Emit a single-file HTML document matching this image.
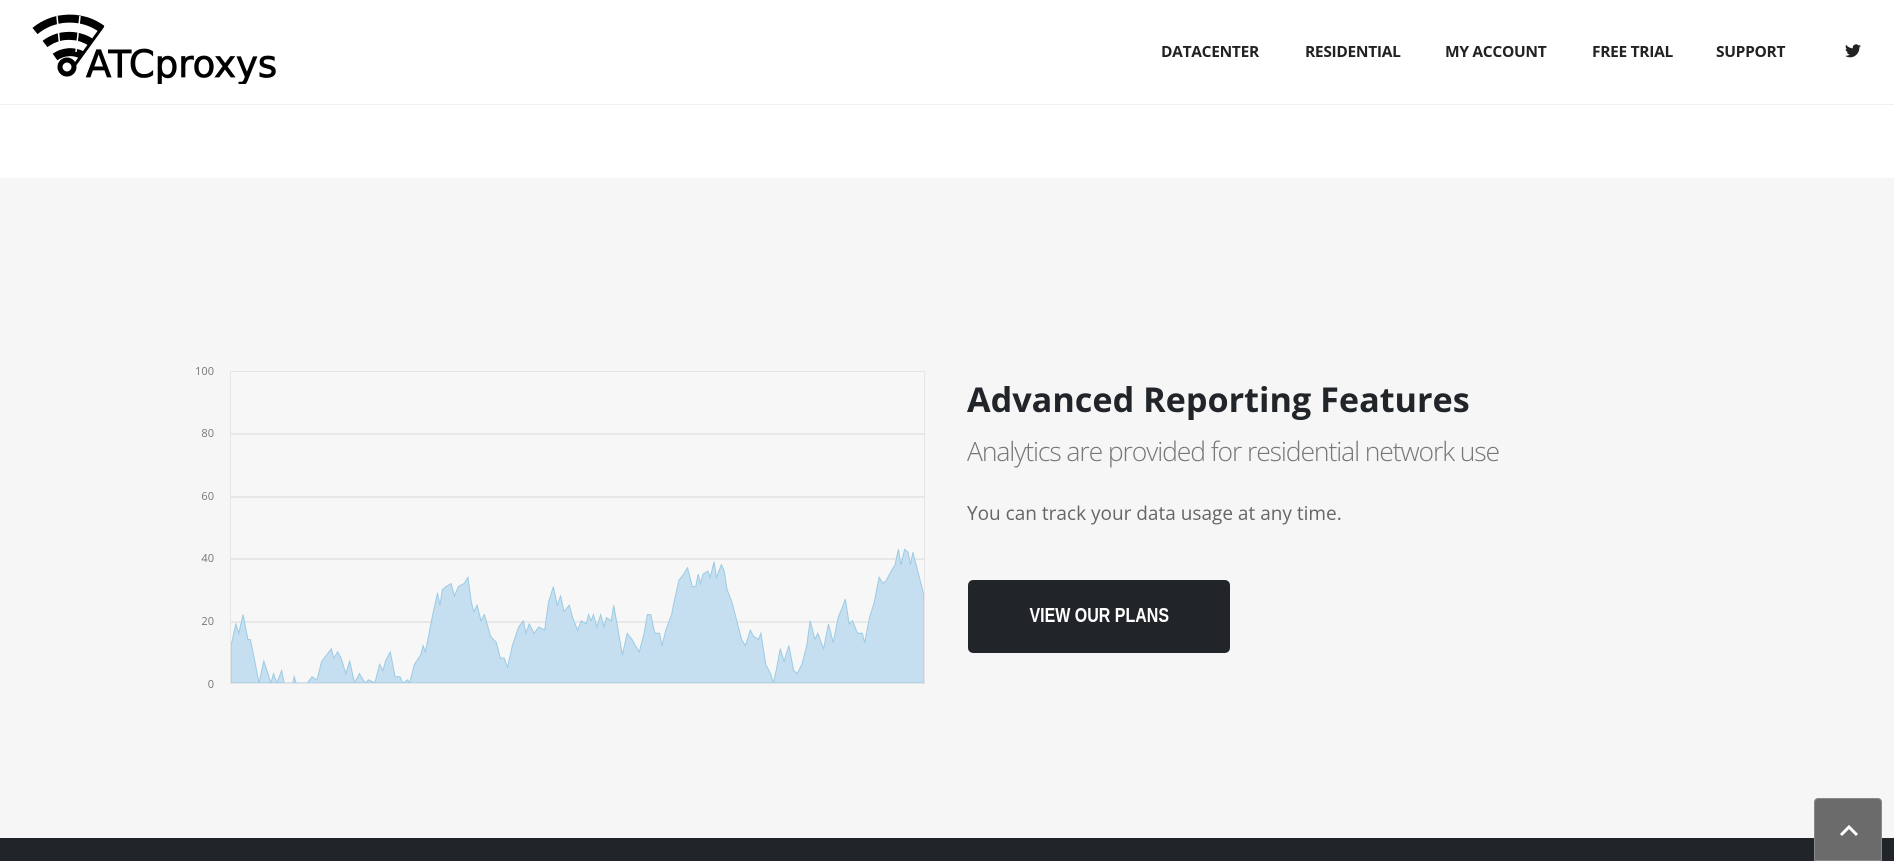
<!DOCTYPE html>
<html><head><meta charset="utf-8"><style>
*{margin:0;padding:0;box-sizing:border-box}
body{width:1894px;height:861px;overflow:hidden;background:#f6f6f6;font-family:"Open Sans","Liberation Sans",sans-serif;position:relative}
.hdr{position:absolute;left:0;top:0;width:1894px;height:105px;background:#fff;border-bottom:1px solid #f0f0f0}
.band{position:absolute;left:0;top:105px;width:1894px;height:73px;background:#fff}
.nav a{position:absolute;top:40px;font-size:15.5px;font-weight:bold;color:#222;text-decoration:none;letter-spacing:-0.3px}
.chart{position:absolute;left:230px;top:371px;width:695px;height:313px;border:1px solid #e6e6e6;background:#f7f7f7}
.gl{position:absolute;left:0;width:100%;height:2px;background:#e8e8e8}
.lbl{position:absolute;width:30px;left:184px;text-align:right;font-size:11px;color:#777}
h2{position:absolute;left:967px;top:376px;font-size:34.2px;font-weight:bold;color:#212529;white-space:nowrap}
.sub{position:absolute;left:967px;top:433px;font-size:26.5px;font-weight:300;color:#777;letter-spacing:-1.1px;white-space:nowrap}
.p{position:absolute;left:967px;top:500px;font-size:19px;color:#666;white-space:nowrap}
.btn{position:absolute;left:968px;top:580px;width:262px;height:73px;background:#212529;border-radius:5px;color:#fff;font-weight:bold;font-size:20px;text-align:center;line-height:73px;font-family:"Liberation Sans Narrow","Liberation Sans",sans-serif}
.foot{position:absolute;left:0;top:838px;width:1894px;height:23px;background:#212529}
.top{position:absolute;left:1814px;top:798px;width:68px;height:63px;background:#6b6b6b;border-radius:4px 4px 0 0;border:1px solid #888}
</style></head><body>
<div class="hdr">
<svg style="position:absolute;left:30px;top:14px" width="260" height="70" viewBox="0 0 260 70">
 <g fill="none" stroke="#000" stroke-linecap="butt">
  <path d="M5 17 A55 55 0 0 1 72 15" stroke-width="8"/>
  <path d="M15 30 A40 40 0 0 1 62 29" stroke-width="8"/>
  <path d="M25 43 A26 26 0 0 1 52 41" stroke-width="8"/>
  <path d="M44 52 L73 12" stroke-width="3"/>
 </g>
 <g stroke="#fff" stroke-width="1.5"><path d="M27 2 L30 35"/><path d="M50 2 L46 38"/></g>
 <circle cx="37" cy="53" r="7" fill="none" stroke="#000" stroke-width="5"/>
 <text x="56" y="63" font-family="DejaVu Sans,Liberation Sans,sans-serif" font-size="37" fill="#000" stroke="#000" stroke-width="0.8" letter-spacing="0">ATCproxys</text>
</svg>
<div class="nav">
<a style="left:1161px">DATACENTER</a><a style="left:1305px">RESIDENTIAL</a><a style="left:1445px">MY ACCOUNT</a><a style="left:1592px">FREE TRIAL</a><a style="left:1716px">SUPPORT</a>
<svg style="position:absolute;left:1845px;top:44px" width="16" height="14" viewBox="0 0 24 20"><path fill="#222" d="M24 2.4a10 10 0 0 1-2.8.8A5 5 0 0 0 23.3.4a10 10 0 0 1-3.1 1.2A4.9 4.9 0 0 0 11.8 6 14 14 0 0 1 1.7.9a4.9 4.9 0 0 0 1.5 6.6A4.9 4.9 0 0 1 1 6.9 4.9 4.9 0 0 0 4.9 11.8a5 5 0 0 1-2.2.1 4.9 4.9 0 0 0 4.6 3.4A9.9 9.9 0 0 1 0 17.3 14 14 0 0 0 7.5 19.5c9 0 14-7.5 14-14v-.6A10 10 0 0 0 24 2.4z"/></svg>
</div>
</div>
<div class="band"></div>
<div class="lbl" style="top:364px">100</div>
<div class="lbl" style="top:426px">80</div>
<div class="lbl" style="top:489px">60</div>
<div class="lbl" style="top:551px">40</div>
<div class="lbl" style="top:614px">20</div>
<div class="lbl" style="top:677px">0</div>
<div class="chart">
<div class="gl" style="top:61px"></div><div class="gl" style="top:124px"></div><div class="gl" style="top:186px"></div><div class="gl" style="top:249px"></div>
<svg style="position:absolute;left:0;top:0" width="693" height="311" viewBox="102 0 1436 100" preserveAspectRatio="none">
<path fill="#c5dff0" stroke="#9ccbe3" stroke-width="1" vector-effect="non-scaling-stroke" d="M102 100 L102 88 L112 81 L118 84 L127 78 L137 86 L142 86 L150 92 L160 100 L170 93 L185 100 L190 97 L197 100 L207 96 L212 100 L230 100 L233 98 L237 100 L260 100 L270 98 L280 99 L290 93 L300 91 L310 89 L315 92 L323 90 L330 92 L340 97 L348 93 L358 100 L368 97 L380 100 L387 99 L400 100 L410 94 L417 96 L422 93 L432 90 L442 98 L452 98 L458 100 L468 99 L472 100 L482 94 L495 91 L500 88 L505 90 L520 78 L530 71 L535 75 L540 70 L548 69 L558 68 L565 72 L573 69 L585 68 L593 66 L600 74 L605 77 L612 75 L620 80 L627 78 L640 85 L652 87 L660 92 L668 92 L675 95 L685 88 L698 82 L708 80 L713 84 L720 81 L730 84 L740 82 L752 83 L760 74 L770 69 L778 75 L785 72 L792 77 L803 75 L810 79 L820 83 L828 80 L838 81 L843 78 L848 80 L853 78 L860 82 L868 78 L875 82 L880 79 L890 80 L895 75 L903 82 L913 91 L923 84 L933 86 L940 88 L948 90 L958 84 L965 78 L972 78 L980 84 L990 84 L995 88 L1003 83 L1015 78 L1020 74 L1030 67 L1040 65 L1048 63 L1058 69 L1065 69 L1070 65 L1075 68 L1080 65 L1090 64 L1095 66 L1103 61 L1108 66 L1113 64 L1118 62 L1124 64 L1130 70 L1140 74 L1150 80 L1160 86 L1168 88 L1178 83 L1185 85 L1195 86 L1200 84 L1210 94 L1220 97 L1226 100 L1233 95 L1240 89 L1248 93 L1258 88 L1268 96 L1275 97 L1285 94 L1295 88 L1302 80 L1312 86 L1318 84 L1325 87 L1330 89 L1340 81 L1350 87 L1360 79 L1368 76 L1375 73 L1383 81 L1390 80 L1400 84 L1410 84 L1415 87 L1425 79 L1435 74 L1445 66 L1453 68 L1460 67 L1470 64 L1478 62 L1485 57 L1490 62 L1498 57 L1505 58 L1510 62 L1515 58 L1525 64 L1535 70 L1538 72 L1538 100 Z"/>
</svg>
</div>
<h2>Advanced Reporting Features</h2>
<div class="sub">Analytics are provided for residential network use</div>
<div class="p">You can track your data usage at any time.</div>
<div class="btn"><span style="display:inline-block;transform:scaleX(0.8)">VIEW OUR PLANS</span></div>
<div class="foot"></div>
<div class="top"><svg style="position:absolute;left:24px;top:26px" width="20" height="12" viewBox="0 0 20 12"><path d="M2 10 L10 2 L18 10" fill="none" stroke="#fff" stroke-width="3"/></svg></div>
</body></html>
